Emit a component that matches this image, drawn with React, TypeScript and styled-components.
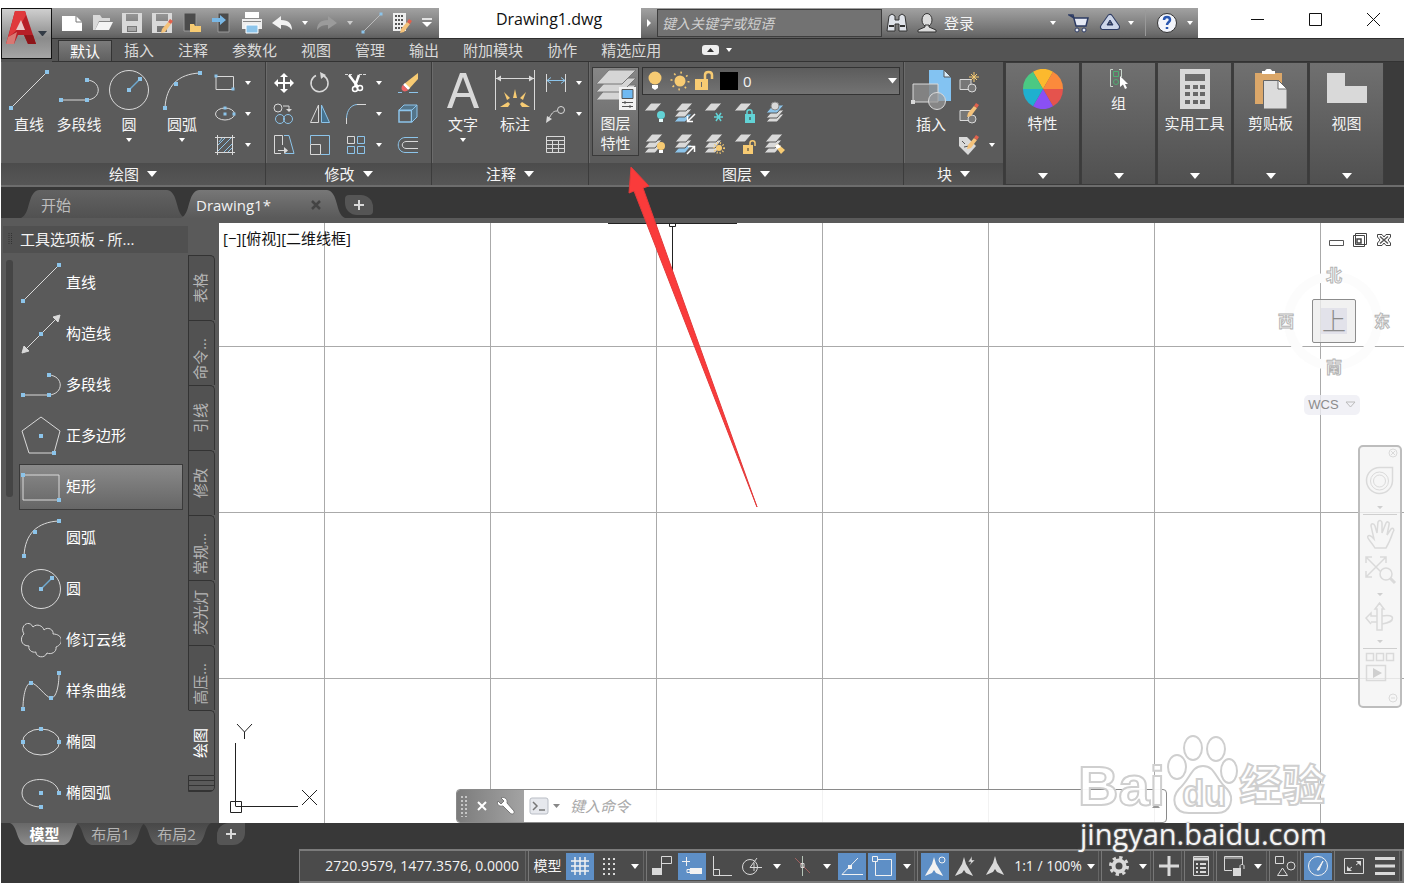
import React from "react";
import styled, { createGlobalStyle, css } from "styled-components";

const L = "#d9d9d9";
const B = "#8cc4ea";
const Y = "#f7cb73";

const GlobalStyle = createGlobalStyle`
  *, *::before, *::after { box-sizing: border-box; }
  body {
    margin: 0;
    background: #fff;
    color: #f4f4f4;
    font: 15px/20px "Open Sans", "Noto Sans CJK SC", sans-serif;
  }
  button, input, select {
    font: inherit;
    color: inherit;
    margin: 0;
    padding: 0;
    border: 0;
    background: none;
  }
  svg { display: block; flex: none; }
`;

/* ---------- icon helpers ---------- */

const Svg = ({ w = 24, h, box, children }: { w?: number; h?: number; box?: string; children: React.ReactNode }) => (
  <svg width={w} height={h ?? w} viewBox={box ?? `0 0 ${w} ${h ?? w}`} fill="none" stroke={L} strokeWidth="1" aria-hidden="true">
    {children}
  </svg>
);

const Dots = ({ at, s = 4 }: { at: number[][]; s?: number }) => (
  <g fill={B} stroke="none">
    {at.map(([x, y]) => (
      <rect key={`${x}-${y}`} x={x - s / 2} y={y - s / 2} width={s} height={s} />
    ))}
  </g>
);

const Caret = ({ w = 6, color = "#fff" }: { w?: number; color?: string }) => (
  <svg width={w} height={w / 2 + 1} viewBox="0 0 12 8" preserveAspectRatio="none" aria-hidden="true">
    <path d="M0 0H12L6 8Z" fill={color} />
  </svg>
);

const Sheet = ({ x = 0, y = 0, fill = L }: { x?: number; y?: number; fill?: string }) => (
  <path d="M7 0H18L11 8H0Z" transform={`translate(${x} ${y})`} fill={fill} stroke="#5b5b5b" />
);

const Stack = ({ mid = L, low = L }: { mid?: string; low?: string }) => (
  <>
    <Sheet x={1} y={13} fill={low} />
    <Sheet x={1} y={8} fill={mid} />
    <Sheet x={2} y={2} />
  </>
);

const pencil = (
  <g stroke="none">
    <path d="M12 15L11 19L15 18L21 10L18 8Z" fill="#f4c27a" />
    <path d="M18 8L21 10L23 7L20 5Z" fill="#e0614d" />
  </g>
);

/* ---------- drawing tools, 40px ---------- */

const big = {
  line: (
    <Svg w={40}>
      <path d="M2 38L38 2" />
      <Dots at={[[2, 38], [38, 2]]} />
    </Svg>
  ),
  xline: (
    <Svg w={40}>
      <path d="M4 36L36 4" />
      <path d="M1 39L3 32L8 37ZM39 1L32 3L37 8Z" fill={L} />
      <Dots at={[[20, 20]]} />
    </Svg>
  ),
  pline: (
    <Svg w={40}>
      <path d="M2 30H28C43 29 43 11 28 10" />
      <Dots at={[[2, 30], [28, 30], [28, 10]]} />
    </Svg>
  ),
  polygon: (
    <Svg w={40}>
      <path d="M20 1L39 15L33 37H8L1 15Z" />
      <Dots at={[[20, 20], [33, 37]]} />
    </Svg>
  ),
  rect: (
    <Svg w={40}>
      <path d="M2 8H38V33H2Z" />
      <Dots at={[[2, 8], [38, 33]]} />
    </Svg>
  ),
  arc: (
    <Svg w={40}>
      <path d="M3 38C4 16 16 4 38 3" />
      <Dots at={[[3, 38], [14, 14], [38, 3]]} />
    </Svg>
  ),
  circle: (
    <Svg w={40}>
      <circle cx="20" cy="20" r="19.500" />
      <path d="M20 20L31 9" stroke="#6fa9d0" strokeWidth="1.500" />
      <Dots at={[[20, 20], [31, 9]]} />
    </Svg>
  ),
  cloud: (
    <Svg w={40}>
      <path d="M3 14C-2 6 8 -1 12 7C16 3 22 6 23 10C27 6 33 10 32 14C42 14 43 24 35 27C36 32 30 35 26 33C23 40 14 36 15 32C11 33 7 30 8 26C-1 26 -1 17 3 14Z" />
    </Svg>
  ),
  spline: (
    <Svg w={40}>
      <path d="M2 38C2 24 5 12 10 12C16 12 24 26 30 27C35 27 38 16 38 2" />
      <Dots at={[[2, 38], [10, 12], [30, 27], [38, 2]]} />
    </Svg>
  ),
  ellipse: (
    <Svg w={40}>
      <ellipse cx="20" cy="20" rx="18.500" ry="13" />
      <Dots at={[[20, 7], [2, 20], [38, 20]]} />
    </Svg>
  ),
  ellipseArc: (
    <Svg w={40}>
      <path d="M38 20C36 2 1 2 1 20C1 28 9 34 20 34" />
      <Dots at={[[20, 20], [38, 20], [20, 34]]} />
    </Svg>
  ),
  text: (
    <Svg w={40}>
      <path d="M4 38L17 3H23L36 38H31L27 27H13L9 38ZM14 23H26L20 7Z" fill={L} stroke="none" fillRule="evenodd" />
    </Svg>
  ),
  dim: (
    <Svg w={40}>
      <path d="M.5 0V40M39.500 0V40M1 8.500H39" />
      <path d="M1 8.500L6 5.500V11.500ZM39 8.500L34 5.500V11.500Z" fill={L} stroke="none" />
      <g fill={Y} stroke="none">
        <path d="M18 28L20 19L22 28ZM12 30L9 22L15 28ZM28 30L31 22L25 28ZM5 37L13 32L15 34L13 37ZM35 37L27 32L25 34L27 37Z" />
      </g>
    </Svg>
  ),
  layers: (
    <Svg w={42}>
      <g fill="#d5d5d5" stroke="#777">
        <path d="M14 16H41L27 31H1Z" />
        <path d="M14 9H41L27 23H1Z" />
        <path d="M14 1H41L27 15H1Z" />
      </g>
      <path d="M24 18H41V41H24Z" fill="#f2f2f2" stroke="none" />
      <path d="M27 20.500H38V29.500H27Z" fill="#6fb9f2" stroke="#555" />
      <path d="M27 33.500H38M27 37.500H38M30 32V35M35 36V39" stroke="#555" />
    </Svg>
  ),
  insert: (
    <Svg w={40}>
      <path d="M18 0H33L40 7V31H18Z" fill="#83c3f2" stroke="none" />
      <path d="M33 0V7H40Z" fill="#d8ecfa" stroke="#555" />
      <path d="M2 14H27V32H2Z" fill="#8a8a8a" fillOpacity=".85" />
      <circle cx="26" cy="31" r="8.500" fill="#999" fillOpacity=".7" />
      <path d="M0 30H4V34H0Z" fill={L} stroke="none" />
    </Svg>
  ),
  wheel: (
    <Svg w={40}>
      <g stroke="none">
        <path d="M20 20L10 2.700A20 20 0 0 1 30 2.700Z" fill="#fcb92d" />
        <path d="M20 20L30 2.700A20 20 0 0 1 40 20Z" fill="#fb8a3c" />
        <path d="M20 20L40 20A20 20 0 0 1 30 37.300Z" fill="#e5534d" />
        <path d="M20 20L30 37.300A20 20 0 0 1 10 37.300Z" fill="#8a50f5" />
        <path d="M20 20L10 37.300A20 20 0 0 1 0 20Z" fill="#1fb0cf" />
        <path d="M20 20L0 20A20 20 0 0 1 10 2.700Z" fill="#4bc983" />
      </g>
    </Svg>
  ),
  group: (
    <Svg w={20}>
      <path d="M4 .5H1.500V17.500H4M10 .5H12.500V8" stroke="#c9d6cc" />
      <path d="M4.500 2.500H9.500V7.500H4.500Z" stroke="#4fae72" />
      <circle cx="7" cy="13" r="2.500" stroke="#4fae72" />
      <path d="M11 7V18L14 15.500L16 20L18 19L16 15H19Z" fill="#fff" stroke="none" />
    </Svg>
  ),
  calc: (
    <Svg w={40}>
      <path d="M5 0H35V40H5ZM10 5V12H30V5ZM10 16V20H15V16ZM18 16V20H23V16ZM25 16V20H30V16ZM10 23V27H15V23ZM18 23V27H23V23ZM25 23V27H30V23ZM10 31V35H15V31ZM18 31V35H23V31ZM25 31V35H30V31Z" fill={L} stroke="none" fillRule="evenodd" />
    </Svg>
  ),
  clip: (
    <Svg w={40}>
      <path d="M4 4H31V35H4Z" fill="#dba769" stroke="none" />
      <path d="M11 2H14C15 -1 20 -1 21 2H24V5H11Z" fill="#fff" stroke="none" />
      <path d="M12.500 11.500H27L36 20V40H12.500Z" fill="#dcdcdc" stroke="#666" />
      <path d="M27 11V20H36Z" fill="#fff" stroke="#666" />
    </Svg>
  ),
  base: (
    <Svg w={40}>
      <path d="M0 4H18V17H40V34H0Z" fill={L} stroke="none" />
    </Svg>
  ),
};

/* ---------- ribbon tools, 24px ---------- */

const small = {
  rect: (
    <Svg>
      <path d="M3 5.500H20.500V18.500H3Z" />
      <Dots at={[[3, 5], [20, 18]]} s={3} />
    </Svg>
  ),
  ellipse: (
    <Svg>
      <ellipse cx="12" cy="12" rx="9.500" ry="6" />
      <Dots at={[[12, 6], [12, 12], [21, 12]]} s={3} />
    </Svg>
  ),
  hatch: (
    <Svg>
      <path d="M2 4.500H22M2 19.500H22M4.500 2V22M19.500 2V22" />
      <path d="M5 12L12 5M5 18L18 5M11 19L19 11M6 9L9 5M15 19L19 15" stroke={B} />
    </Svg>
  ),
  move: (
    <Svg>
      <path d="M12 4V20M4 12H20" stroke="#fff" strokeWidth="2" />
      <path d="M12 2L16 6H8ZM12 22L8 18H16ZM2 12L6 8V16ZM22 12L18 16V8Z" fill="#fff" stroke="none" />
    </Svg>
  ),
  rotate: (
    <Svg>
      <path d="M8 4.500A8.500 8.500 0 1 0 16 5" strokeWidth="1.500" />
      <path d="M12 1L18 4L13 8Z" fill={L} stroke="none" />
    </Svg>
  ),
  trim: (
    <Svg>
      <path d="M1 3.500H8M15 3.500H22" strokeDasharray="3 1" />
      <path d="M5 4L14 16M15 4L11 15" stroke="#fff" strokeWidth="2.500" />
      <circle cx="11" cy="18" r="2.500" stroke="#fff" strokeWidth="1.500" />
      <circle cx="16" cy="17" r="2.500" stroke="#fff" strokeWidth="1.500" />
    </Svg>
  ),
  erase: (
    <Svg>
      <path d="M2 21.500H6M13 21.500H22" stroke={B} />
      <path d="M22 2V8L13 18L8 13Z" fill={Y} stroke="none" />
      <path d="M9 12L14 17L12 19L7 14Z" fill="#fff" stroke="none" />
      <path d="M7 14L12 19C9 22 4 20 6 15Z" fill="#e66" stroke="none" />
    </Svg>
  ),
  copy: (
    <Svg>
      <circle cx="6" cy="6" r="4" />
      <path d="M11 4H17V8" />
      <path d="M14 7H20L17 10Z" fill={L} stroke="none" />
      <circle cx="8" cy="17" r="4.500" stroke={B} />
      <circle cx="16" cy="17" r="4.500" stroke={B} />
    </Svg>
  ),
  mirror: (
    <Svg>
      <path d="M10.500 3V20.500H2.500Z" />
      <path d="M13.500 3V20.500H21.500Z" stroke={B} fill="#45728f" />
    </Svg>
  ),
  fillet: (
    <Svg>
      <path d="M2.500 22V16M13 2.500H22" />
      <path d="M2.500 16C3 8 7 3 13 2.500" stroke={B} />
    </Svg>
  ),
  explode: (
    <Svg>
      <path d="M3 8.500H15.500V20H3Z" stroke={B} strokeWidth="1.500" />
      <path d="M3 8L8 3H21L16 8ZM16 8L21 3V15L16 20" stroke={B} fill="#54758a" />
    </Svg>
  ),
  stretch: (
    <Svg>
      <path d="M10.500 12V2.500H2.500V20.500H9M6 17.500H13" />
      <path d="M12 14L16 17.500L12 21Z" fill={L} stroke="none" />
      <path d="M12 2.500H17L22 20.500H13" stroke={B} />
    </Svg>
  ),
  scale: (
    <Svg>
      <path d="M2.500 11V2.500H21.500V21.500H13" stroke={B} />
      <path d="M2.500 11.500H12.500V21.500H2.500Z" />
    </Svg>
  ),
  array: (
    <Svg>
      <path d="M3.500 3.500H10.500V10.500H3.500Z" />
      <path d="M13.500 3.500H20.500V10.500H13.500ZM3.500 13.500H10.500V20.500H3.500ZM13.500 13.500H20.500V20.500H13.500Z" stroke={B} />
    </Svg>
  ),
  offset: (
    <Svg>
      <path d="M22 4.500H9C0 5 0 19 9 19.500H22" stroke={B} />
      <path d="M22 8.500H10C5 9 5 15 10 15.500H22" />
    </Svg>
  ),
  linear: (
    <Svg>
      <path d="M2.500 3V21M21.500 3V21" />
      <path d="M3 9.500H21M7 6.500L3 9.500L7 12.500M17 6.500L21 9.500L17 12.500" stroke={B} />
    </Svg>
  ),
  leader: (
    <Svg>
      <circle cx="17" cy="8" r="3.500" />
      <path d="M13 9C9 9 8 11 4 18" />
      <path d="M2 21L3 14L8 17Z" fill={L} stroke="none" />
    </Svg>
  ),
  table: (
    <Svg>
      <path d="M2.500 3.500H20.500V19.500H2.500ZM2.500 7.500H20.500M2.500 11.500H20.500M2.500 15.500H20.500M8.500 7V19M14.500 7V19" />
    </Svg>
  ),
  off: (
    <Svg>
      <Sheet x={1} y={2} />
      <circle cx="18" cy="14" r="4" fill="#62d3d6" stroke="none" />
      <path d="M16 18H20V21H16Z" fill="#e6f8f8" stroke="none" />
    </Svg>
  ),
  isolate: (
    <Svg>
      <Stack mid={L} low={B} />
      <path d="M22 13L15 20M14.500 15V20.500H20" stroke="#fff" strokeWidth="1.500" />
    </Svg>
  ),
  freeze: (
    <Svg>
      <Sheet x={1} y={2} />
      <path d="M11 16H20M13 12L18 20M18 12L13 20" stroke="#62d3d6" strokeWidth="1.500" />
    </Svg>
  ),
  lock: (
    <Svg>
      <Sheet x={1} y={2} />
      <path d="M14 14V11C14 8 19 8 19 11V14" stroke="#62d3d6" strokeWidth="1.500" />
      <path d="M12 13H22V22H12Z" fill="#62d3d6" stroke="none" />
      <path d="M17 16V19" stroke="#333" />
    </Svg>
  ),
  current: (
    <Svg>
      <Sheet x={3} y={13} />
      <Sheet x={3} y={9} />
      <Sheet x={3} y={4} fill={B} />
      <circle cx="12" cy="5" r="4" fill={L} stroke="#888" />
    </Svg>
  ),
  on: (
    <Svg>
      <Stack />
      <circle cx="18" cy="14" r="4" fill={Y} stroke="none" />
      <path d="M16 18H20V21H16Z" fill="#fff" stroke="none" />
    </Svg>
  ),
  unisolate: (
    <Svg>
      <Stack mid={L} low={B} />
      <path d="M14 22L21 15M15 14.500H21.500V20" stroke="#fff" strokeWidth="1.500" />
    </Svg>
  ),
  thaw: (
    <Svg>
      <Stack />
      <circle cx="16" cy="16" r="5" stroke={Y} strokeWidth="2" strokeDasharray="1 2" />
      <circle cx="16" cy="16" r="3" fill={Y} stroke="none" />
    </Svg>
  ),
  unlock: (
    <Svg>
      <Sheet x={1} y={2} />
      <path d="M17 13V11C17 8 22 8 22 11V14" stroke={Y} strokeWidth="1.500" />
      <path d="M10 13H20V22H10Z" fill={Y} stroke="none" />
      <path d="M15 16V19" stroke="#333" />
    </Svg>
  ),
  match: (
    <Svg>
      <Stack />
      <path d="M12 14L15 12L22 18L18 22Z" fill={Y} stroke="none" />
      <path d="M12 14L15 12L18 15L14 17Z" fill="#fff" stroke="none" />
    </Svg>
  ),
  create: (
    <Svg>
      <path d="M3 8.500H14V18.500H3Z" fill="#777" />
      <circle cx="15" cy="17" r="4" fill="#777" />
      <path d="M17 1V11M12 6H22M14 3L20 9M20 3L14 9" stroke={Y} />
    </Svg>
  ),
  edit: (
    <Svg>
      <path d="M3 8.500H14V18.500H3Z" fill="#777" />
      <circle cx="15" cy="17" r="4" fill="#777" />
      <g transform="translate(-1 -4)">{pencil}</g>
    </Svg>
  ),
  attr: (
    <Svg>
      <path d="M2 4H10L19 13L11 22L2 13Z" fill={L} stroke="none" />
      <path d="M5 8L8 11M7 14L12 13" stroke="#555" />
      <g transform="translate(-1 -3)">{pencil}</g>
    </Svg>
  ),
};

/* ---------- title bar ---------- */

const qat = {
  fresh: <Svg w={22}><path d="M1 4H15L21 10V19H1Z" fill="#fff" stroke="none" /><path d="M15 4V10H21" stroke="#777" /></Svg>,
  open: <Svg w={22}><path d="M2 18V3H9L11 6H19V9H8L4 18Z" fill={L} stroke="none" /><path d="M8 10H22L18 18H4Z" fill="#f4f4f4" stroke="none" /></Svg>,
  save: <Svg w={22}><path d="M1 1H21V21H1ZM5 2V9H17V2ZM6 14V20H16V14Z" fill={L} stroke="none" fillRule="evenodd" /><path d="M7 16H15M7 18H15" /></Svg>,
  saveAs: <Svg w={22}><path d="M1 1H21V21H1ZM5 2V9H17V2ZM6 14V20H16V14Z" fill={L} stroke="none" fillRule="evenodd" /><g transform="translate(-1 2)">{pencil}</g></Svg>,
  webOpen: <Svg w={22}><path d="M3 1H15V19H3Z" fill="#4b4b4b" stroke="#999" /><path d="M9 12H13L14 14H20V20H9Z" fill={Y} stroke="none" /></Svg>,
  webSave: <Svg w={22}><path d="M7 1H18V20H7Z" fill="#4b4b4b" stroke="#999" /><path d="M1 6H9V3L15 8L9 13V10H1Z" fill="#79b8e6" stroke="none" /></Svg>,
  print: <Svg w={22}><path d="M4 0H18V6H4Z" fill="#fff" stroke="none" /><path d="M1 7H21V17H1Z" fill="#eee" stroke="none" /><path d="M2 9.500H20" stroke="#888" /><path d="M5 13H17V21H5Z" fill={B} stroke="#fff" /></Svg>,
  undo: <Svg w={22}><path d="M1 11L10 4V8C18 8 21 12 21 18C18 14 15 13 10 13V17Z" fill="#f2f2f2" stroke="none" /></Svg>,
  redo: <Svg w={22}><path d="M21 11L12 4V8C4 8 1 12 1 18C4 14 7 13 12 13V17Z" fill="#9b9b9b" stroke="none" /></Svg>,
  line: <Svg w={22}><path d="M2 20L20 2" stroke="#bbb" /><Dots at={[[2, 20], [20, 2]]} s={3} /></Svg>,
  sheet: <Svg w={22}><path d="M2 1H15V19H2Z" fill="#eee" stroke="none" /><path d="M4 4H13M4 8H13M4 12H13M4 16H13" stroke="#555" strokeWidth="2" strokeDasharray="2 1" /><g transform="translate(-2 2)">{pencil}</g></Svg>,
};

const barFill = "linear-gradient(#a2a2a2, #6c6c6c 85%, #5e5e5e)";

const Window = styled.div`
  position: relative;
  display: flex;
  flex-direction: column;
  min-height: 100vh;
  min-width: 1280px;
  padding: 8px 1px 1px;
  overflow: hidden;
`;

const Header = styled.header`
  display: grid;
  grid-template-columns: 51px minmax(0, 1fr);
  grid-template-rows: 30px 24px;
  background: linear-gradient(#fff 30px, #545454 30px);
`;

const AppButton = styled.button`
  grid-row: 1 / 3;
  height: 51px;
  display: flex;
  align-items: center;
  justify-content: center;
  gap: 2px;
  border: 1px solid #111;
  background: linear-gradient(#cfcfcf, #8b8b8b 60%, #a5a5a5);
  & > svg:first-child {
    align-self: flex-start;
    margin-top: 1px;
  }
`;

const TitleRow = styled.div`
  display: flex;
  min-width: 0;
`;

const QuickBar = styled.div`
  display: flex;
  flex: none;
  align-items: center;
  padding-left: 5px;
  width: 387px;
  background: ${barFill};
`;

const IconButton = styled.button<{ $w?: number }>`
  width: ${(p) => p.$w ?? 30}px;
  height: 30px;
  flex: none;
  display: flex;
  align-items: center;
  justify-content: center;
`;

const FileName = styled.h1`
  flex: 1;
  margin: 0;
  padding-left: 18px;
  color: #111;
  text-align: center;
  font-size: 16px;
  font-weight: 400;
  line-height: 22px;
`;

const InfoBar = styled.div`
  display: flex;
  flex: none;
  align-items: center;
  width: 557px;
  background: ${barFill};
`;

const Search = styled.input`
  flex: none;
  width: 225px;
  height: 28px;
  padding-left: 4px;
  border: 1px solid #3d3d3d;
  background: #727272;
  font-size: 14px;
  font-style: italic;
  &::placeholder { color: #cfcfcf; }
`;

const Login = styled.button`
  display: flex;
  flex: none;
  align-items: center;
  justify-content: space-between;
  width: 114px;
  height: 30px;
  padding-left: 2px;
`;

const Divider = styled.span`
  width: 1px;
  height: 26px;
  margin: 0 6px 0 2px;
  background: #999;
`;

const WindowControls = styled.div`
  display: flex;
  flex: none;
  justify-content: space-between;
  width: 206px;
  padding: 0 2px 6px 30px;
  background: #fff;
`;

const WindowButton = styled.button`
  width: 58px;
  height: 22px;
  display: flex;
  align-items: center;
  justify-content: center;
`;

const TabBar = styled.nav`
  display: flex;
  align-items: flex-end;
  padding-left: 6px;
  border-top: 1px solid #2f2f2f;
  border-bottom: 1px solid #333;
  background: #545454;
`;

const RibbonTab = styled.button<{ $active?: boolean }>`
  height: 21px;
  padding: 0 12px;
  line-height: 19px;
  color: ${(p) => (p.$active ? "#fff" : "#dadada")};
  ${(p) =>
    p.$active &&
    css`
      border: 1px solid #333;
      border-bottom: 0;
      padding: 0 11px;
      background: linear-gradient(#7b7b7b, #606060);
    `}
`;

const RibbonToggle = styled.button`
  display: flex;
  align-items: center;
  gap: 7px;
  height: 22px;
  padding-left: 29px;
`;

/* ---------- ribbon ---------- */

const Ribbon = styled.section`
  display: flex;
  height: 125px;
  border-bottom: 2px solid #6d6d6d;
  background: #3b3b3b;
`;

const Panel = styled.div<{ $w: number }>`
  display: flex;
  flex-direction: column;
  width: ${(p) => p.$w}px;
  flex: none;
  border-right: 1px solid #3c3c3c;
  box-shadow: inset 1px 0 #6b6b6b;
  background: #5b5b5b;
`;

const PanelBody = styled.div<{ $pad?: string }>`
  display: flex;
  flex: 1;
  padding: ${(p) => p.$pad ?? "5px 0 0 3px"};
`;

const PanelFooter = styled.button`
  display: flex;
  align-items: center;
  justify-content: center;
  gap: 8px;
  height: 22px;
  background: linear-gradient(#4c4c4c, #565656);
`;

const BigButton = styled.button<{ $w: number; $framed?: boolean }>`
  display: flex;
  flex-direction: column;
  align-items: center;
  gap: 4px;
  width: ${(p) => p.$w}px;
  height: 89px;
  padding-top: 3px;
  flex: none;
  ${(p) =>
    p.$framed &&
    css`
      padding-top: 1px;
      gap: 2px;
      border: 1px solid #3a3a3a;
      background: linear-gradient(#868686, #646464);
    `}
`;

const IconRows = styled.div<{ $cols: string; $gap?: number }>`
  display: grid;
  grid-template-columns: ${(p) => p.$cols};
  grid-auto-rows: 31px;
  column-gap: ${(p) => p.$gap ?? 0}px;
`;

const Tool = styled.button`
  display: flex;
  align-items: center;
  height: 31px;
  padding-left: 3px;
  gap: 8px;
`;

const LayerColumn = styled.div`
  flex: 1;
  padding: 0 3px 0 1px;
`;

const LayerCombo = styled.label`
  display: flex;
  align-items: center;
  gap: 3px;
  height: 28px;
  margin: 0 0 2px 2px;
  padding: 0 2px 0 0;
  border: 1px solid #333;
  background: linear-gradient(#5c5c5c, #737373);
`;

const LayerSelect = styled.select`
  flex: 1;
  appearance: none;
  outline: none;
  padding-left: 2px;
`;

const Collapsed = styled.button`
  display: flex;
  flex-direction: column;
  align-items: center;
  gap: 4px;
  width: 75px;
  height: 121px;
  margin: 1px 0 0 1px;
  padding: 6px 0 5px;
  flex: none;
  border: 1px solid #3d3d3d;
  border-width: 0 1px;
  background: linear-gradient(#707070, #505050);
  & > :last-child { margin-top: auto; }
`;

/* ---------- document tabs ---------- */

const DocTabs = styled.nav`
  display: flex;
  height: 31px;
  padding: 3px 0 0 20px;
  background: #373737;
`;

const DocTab = styled.button<{ $active?: boolean }>`
  display: flex;
  align-items: center;
  justify-content: space-between;
  width: 164px;
  height: 28px;
  margin-left: ${(p) => (p.$active ? "-4px" : "0")};
  padding: 2px 24px 0 ${(p) => (p.$active ? 15 : 20)}px;
  color: ${(p) => (p.$active ? "#f2f2f2" : "#bdbdbd")};
  background: ${(p) => (p.$active ? "linear-gradient(#777, #5a5a5a)" : "linear-gradient(#626262, #515151)")};
  clip-path: path("M0 28C10 24 6 2 18 0H146C158 2 154 24 164 28Z");
`;

const AddTab = styled.button<{ $bottom?: boolean }>`
  width: 28px;
  height: ${(p) => (p.$bottom ? 22 : 20)}px;
  margin: ${(p) => (p.$bottom ? "0 0 0 6px" : "5px 0 0 0")};
  display: flex;
  align-items: center;
  justify-content: center;
  border-radius: ${(p) => (p.$bottom ? "12px 0 12px 4px" : "4px 12px 4px 12px")};
  background: #555;
`;

/* ---------- workspace ---------- */

const Workspace = styled.main`
  display: flex;
  flex: 1;
  padding-top: 5px;
  background: #5a5a5a;
`;

const Palette = styled.aside`
  display: grid;
  grid-template-columns: 187px 27px;
  width: 218px;
  flex: none;
  align-content: start;
`;

const PaletteTitle = styled.h2`
  grid-column: 1;
  display: flex;
  align-items: center;
  gap: 8px;
  margin: 3px 0 0 2px;
  height: 27px;
  padding: 0 0 2px 5px;
  background: #505050;
  font-size: 15px;
  font-weight: 400;
`;

const PaletteBody = styled.div`
  grid-column: 1;
  grid-row: 2;
  display: flex;
  gap: 6px;
  padding: 7px 5px 0 5px;
`;

const ScrollThumb = styled.div`
  width: 7px;
  height: 237px;
  border-radius: 3px;
  background: #454545;
`;

const ToolList = styled.div`
  display: flex;
  flex-direction: column;
  flex: 1;
  gap: 5px;
`;

const PaletteItem = styled.button<{ $active?: boolean }>`
  display: flex;
  align-items: center;
  gap: 5px;
  height: 46px;
  padding-left: 1px;
  border: 1px solid transparent;
  color: #fff;
  ${(p) =>
    p.$active &&
    css`
      border-color: #3a3a3a;
      background: linear-gradient(#8a8a8a, #666);
    `}
`;

const ItemLabel = styled.span`
  padding-bottom: 2px;
`;

const SideTabs = styled.div`
  grid-column: 2;
  grid-row: 1 / 3;
  padding-top: 32px;
`;

const SideTab = styled.button<{ $active?: boolean; $clipped?: boolean }>`
  display: flex;
  align-items: ${(p) => (p.$clipped ? "flex-end" : "center")};
  justify-content: center;
  width: 27px;
  height: 65px;
  padding: 0 4px ${(p) => (p.$clipped ? 5 : 0)}px 0;
  border: 1px solid #333;
  border-bottom-width: 0;
  border-radius: 0 5px 0 0;
  color: ${(p) => (p.$active ? "#fff" : "#b5b5b5")};
  background: ${(p) => (p.$active ? "#5a5a5a" : "#525252")};
  border-left-color: ${(p) => (p.$active ? "#5a5a5a" : "#333")};
`;

const SideLabel = styled.span`
  writing-mode: vertical-rl;
  text-orientation: sideways;
  transform: rotate(180deg);
`;

const SideMore = styled.div`
  width: 27px;
  height: 17px;
  border: 1px solid #333;
  border-radius: 0 0 5px 0;
  background: repeating-linear-gradient(#5a5a5a 0 4px, #333 4px 5px);
`;

const Canvas = styled.section`
  position: relative;
  flex: 1;
  background-color: #fff;
  background-image: linear-gradient(to right, #aaa 1px, transparent 1px), linear-gradient(#aaa 1px, transparent 1px);
  background-size: 166px 166px;
  background-position: 105px 123px;
`;

const ViewLabel = styled.p`
  margin: 0;
  padding: 5px 4px;
  color: #111;
`;

const ViewControls = styled.div`
  position: absolute;
  top: 9px;
  right: 12px;
  display: flex;
  gap: 8px;
`;

const PlainButton = styled.button`
  display: flex;
  align-items: center;
  justify-content: center;
`;

const CubeRing = styled.div`
  position: absolute;
  top: 49px;
  right: 22px;
  width: 98px;
  height: 98px;
  border: 9px solid #fcfcfc;
  border-radius: 50%;
`;

const Compass = styled.div`
  position: absolute;
  top: 44px;
  right: 14px;
  display: grid;
  grid-template-columns: 34px 44px 34px;
  grid-template-rows: 32px 44px 32px;
  justify-items: center;
`;

const CompassPoint = styled.span<{ $area: string; $align: string }>`
  grid-area: ${(p) => p.$area};
  place-self: ${(p) => p.$align};
  color: #fff;
  font-size: 16px;
  font-weight: 700;
  line-height: 16px;
  -webkit-text-stroke: 1px #b4b4b4;
`;

const CubeFace = styled.button`
  grid-area: 2 / 2;
  width: 44px;
  height: 44px;
  border: 1px solid #8c8c8c;
  border-radius: 2px;
  background: linear-gradient(#e2e2ea, #e2e2ea) center / 26px 26px no-repeat #eeeeeecc;
  color: #8a8a8a;
  font-size: 24px;
  font-weight: 300;
  line-height: 36px;
`;

const Wcs = styled.button`
  position: absolute;
  top: 172px;
  right: 44px;
  display: flex;
  align-items: center;
  justify-content: center;
  gap: 6px;
  width: 56px;
  height: 20px;
  border-radius: 5px;
  background: #ededf4cc;
  color: #8c8c8c;
  font: 13px/20px "Liberation Sans", sans-serif;
`;

const NavBar = styled.div`
  position: absolute;
  top: 222px;
  right: 2px;
  width: 44px;
  height: 263px;
  border: 2px solid #bdbdbd;
  border-radius: 5px;
  background: #f4f4f4cc;
`;

const UcsIcon = styled.div`
  position: absolute;
  left: 9px;
  bottom: 9px;
`;

const Crosshair = styled.div`
  position: absolute;
  left: 389px;
  top: 0;
`;

const CommandLine = styled.form`
  position: absolute;
  left: 237px;
  bottom: 0;
  display: flex;
  width: 60%;
  height: 34px;
  border: 1px solid #8a8a8a;
  border-radius: 4px;
  background: #ffffffd9;
`;

const CommandGrip = styled.div`
  display: flex;
  align-items: center;
  gap: 9px;
  width: 67px;
  padding: 0 0 0 3px;
  border-radius: 3px 0 0 3px;
  background: linear-gradient(90deg, #7c7c7c, #a3a3a3);
`;

const CommandInput = styled.input`
  flex: 1;
  min-width: 0;
  padding-left: 10px;
  outline: none;
  color: #333;
  font-style: italic;
  &::placeholder { color: #a8a8a8; opacity: 1; }
`;

/* ---------- footer ---------- */

const Footer = styled.footer`
  background: #383838;
`;

const LayoutTabs = styled.nav`
  display: flex;
  height: 26px;
  padding-left: 9px;
`;

const LayoutTab = styled.button<{ $active?: boolean }>`
  width: 69px;
  height: 22px;
  color: ${(p) => (p.$active ? "#fff" : "#b4b4b4")};
  font-weight: ${(p) => (p.$active ? 700 : 400)};
  background: ${(p) => (p.$active ? "linear-gradient(#686868, #8c8c8c)" : "linear-gradient(#484848, #5e5e5e)")};
  clip-path: path("M0 0H69C62 3 64 20 54 22H16C6 20 8 3 0 0Z");
  & + & { margin-left: -3px; }
`;

const StatusBar = styled.div`
  display: flex;
  align-items: stretch;
  width: max-content;
  height: 34px;
  margin-left: auto;
  border: solid #7b7b7b;
  border-width: 2px 1px;
  background: #4b4b4b;
  font-size: 14px;
`;

const StatusGroup = styled.div<{ $w: number }>`
  display: flex;
  align-items: center;
  justify-content: center;
  width: ${(p) => p.$w}px;
  border-right: 1px solid #777;
  box-shadow: inset -2px 0 #4b4b4b, inset -3px 0 #666;
`;

const Coordinates = styled.output`
  width: 100%;
  padding-right: 9px;
  text-align: right;
`;

const StatusButton = styled.button<{ $w?: number; $on?: boolean }>`
  display: flex;
  align-items: center;
  justify-content: center;
  width: ${(p) => p.$w ?? 30}px;
  height: 29px;
  white-space: nowrap;
  gap: 5px;
  ${(p) => p.$on && css`background: #5e8fc6; outline: 1px solid #4b4b4b; outline-offset: -1px;`}
`;

const Watermark = styled.div`
  position: absolute;
  left: 1078px;
  top: 734px;
  color: #f4f4f4;
  pointer-events: none;
`;

const WatermarkLogo = styled.div`
  position: relative;
  display: flex;
  align-items: flex-end;
  height: 80px;
  color: #fffffff0;
  font: 700 56px/56px "Liberation Sans", "Noto Sans CJK SC", sans-serif;
  -webkit-text-stroke: 2px #cfcfcf;
`;

const WatermarkPaw = styled.div`
  position: relative;
  width: 74px;
  height: 80px;
`;

const WatermarkDu = styled.span`
  position: absolute;
  left: 17px;
  top: 40px;
  font-size: 36px;
  line-height: 40px;
`;

const WatermarkCn = styled.span`
  font-size: 43px;
`;

const WatermarkUrl = styled.div`
  padding: 4px 0 0 2px;
  font-size: 29px;
  line-height: 32px;
  text-shadow: 0 0 2px #777, 0 0 2px #777;
`;

const PointerArrow = styled.div`
  position: absolute;
  left: 620px;
  top: 160px;
  pointer-events: none;
`;

/* ---------- status icons ---------- */

const W = "#f2f2f2";
const person = "M11 1L13 8L19 18L20 20L13 17L11 14L9 17L2 20L3 18L9 8Z";
const st = {
  grid: <Svg w={22}><path d="M6 2V20M11 2V20M16 2V20M2 6H20M2 11H20M2 16H20" stroke={W} strokeWidth="1.500" /></Svg>,
  snap: <Svg w={22}><path d="M4 4H19M4 9H19M4 14H19M4 19H19" strokeWidth="2" strokeDasharray="2 3" /></Svg>,
  infer: <Svg w={22}><path d="M1 13H11V20H1Z" fill={L} stroke="none" /><path d="M10.500 13V1.500H20.500V8.500H11" /></Svg>,
  dyn: <Svg w={22}><path d="M1 6.500H9M5.500 2V11" stroke={W} /><path d="M9 13H21V19H9Z" fill={W} stroke="none" /><path d="M6 14.500H9V17.500H6Z" stroke={W} /></Svg>,
  ortho: <Svg w={22}><path d="M2.500 1V20.500H21M2.500 14.500H8.500V20" /></Svg>,
  polar: <Svg w={22}><circle cx="9" cy="12" r="7.500" /><path d="M21 12.500H9L16 3M13 8V16" /></Svg>,
  iso: <Svg w={22}><path d="M4 3L19 18" stroke="#a06060" /><path d="M11.500 1V21" stroke="#b7c4b8" /><path d="M10 8.500H13V12.500H10Z" /></Svg>,
  track: <Svg w={22}><path d="M17 3L1 19.500H22" stroke={W} /><path d="M7 10H11V14H7Z" fill={W} stroke="none" /></Svg>,
  osnap: <Svg w={22}><path d="M4.500 4.500H20.500V20.500H4.500Z" stroke={W} /><path d="M1.500 1.500H6.500V6.500H1.500Z" fill="#5e8fc6" stroke={W} /></Svg>,
  annoVis: <Svg w={22}><path d={person} transform="translate(-1 1)" fill={W} stroke="none" /><circle cx="18" cy="5" r="3" stroke={W} /></Svg>,
  annoAuto: <Svg w={22}><path d={person} transform="translate(-1 1)" fill={L} stroke="none" /><path d="M18 1L14 7H17L15 11L21 5H18Z" fill={L} stroke="#4b4b4b" strokeWidth=".5" /></Svg>,
  anno: <Svg w={22}><path d={person} fill={L} stroke="none" /></Svg>,
  gear: <Svg w={22}><circle cx="11" cy="11" r="5.500" strokeWidth="4" /><circle cx="11" cy="11" r="8.500" strokeWidth="3" strokeDasharray="3.300 3.370" /></Svg>,
  plus: <Svg w={22}><path d="M11 1V21M1 11H21" strokeWidth="3" /></Svg>,
  props: <Svg w={22}><path d="M3.500 1.500H18.500V20.500H3.500Z" /><path d="M4 4H18" strokeWidth="3" /><path d="M6 9H8M10 9H16M6 13H8M10 13H16M6 17H8M10 17H16" strokeWidth="2" /></Svg>,
  lockUi: <Svg w={22}><path d="M9 15.500H1.500V1.500H19.500V10M2 3H19" /><path d="M10 13H18V21H10Z" fill={L} stroke="none" /><path d="M17 13V11C17 9 21 9 21 11V14" /></Svg>,
  shapes: <Svg w={22}><path d="M1.500 1.500H9.500V8.500H1.500ZM8.500 13L13.500 20.500H3.500Z" /><circle cx="17" cy="11" r="4" /></Svg>,
  perf: <Svg w={22}><circle cx="11" cy="11" r="9.500" stroke={W} /><path d="M10 15L16 6L12 15Z" fill={W} stroke={W} /></Svg>,
  full: <Svg w={22}><path d="M1.500 3.500H20.500V18.500H1.500Z" /><path d="M13 6H18V11ZM4 11V16H9Z" fill={L} stroke="none" /><path d="M13 10L17 7M5 15L9 12" /></Svg>,
  menu: <Svg w={22}><path d="M1 3.500H21M1 11H21M1 18.500H21" strokeWidth="3" /></Svg>,
};

const info = {
  binoculars: <Svg w={22}><path d="M3 4L6 2L9 4V8H13V4L16 2L19 4L21 19H13V12H9V19H1Z" fill="#dfe3ea" stroke="#333" /><path d="M3 14H8M14 14H19" stroke="#333" strokeWidth="2" /></Svg>,
  user: <Svg w={22}><ellipse cx="11" cy="8" rx="5" ry="6.500" fill="#dcdcdc" stroke="#333" /><path d="M9 13V15L2 18V20H20V18L13 15V13Z" fill="#dcdcdc" stroke="#333" /></Svg>,
  cart: <Svg w={22}><path d="M1 3H5L8 14H18L20 6H6Z" fill="#e6eaf5" stroke="#2d3b63" strokeWidth="1.500" /><circle cx="9" cy="18" r="2" fill="#e6eaf5" stroke="#2d3b63" /><circle cx="16" cy="18" r="2" fill="#e6eaf5" stroke="#2d3b63" /></Svg>,
  share: <Svg w={22}><path d="M11 5L4 15H18Z" stroke="#2d3b63" strokeWidth="6" strokeLinejoin="round" /><path d="M11 5L4 15H18Z" stroke="#cdd6ea" strokeWidth="4" strokeLinejoin="round" /><path d="M11 8L8 13H14Z" stroke="#2d3b63" /></Svg>,
};

/* ---------- data ---------- */

const ribbonTabs = ["默认", "插入", "注释", "参数化", "视图", "管理", "输出", "附加模块", "协作", "精选应用"];

const quick: [string, React.ReactNode][] = [
  ["新建", qat.fresh], ["打开", qat.open], ["保存", qat.save], ["另存为", qat.saveAs],
  ["从云打开", qat.webOpen], ["保存到云", qat.webSave], ["打印", qat.print], ["放弃", qat.undo],
];

const paletteTools: [string, React.ReactNode][] = [
  ["直线", big.line], ["构造线", big.xline], ["多段线", big.pline], ["正多边形", big.polygon],
  ["矩形", big.rect], ["圆弧", big.arc], ["圆", big.circle], ["修订云线", big.cloud],
  ["样条曲线", big.spline], ["椭圆", big.ellipse], ["椭圆弧", big.ellipseArc],
];

const sideTabs = ["表格", "命令...", "引线", "修改", "常规...", "荧光灯", "高压...", "绘图"];

const collapsed: [string, React.ReactNode][] = [
  ["特性", big.wheel], ["组", big.group], ["实用工具", big.calc], ["剪贴板", big.clip], ["视图", big.base],
];

const Tools = ({ items, cols, gap }: { items: [React.ReactNode, boolean?][]; cols: string; gap?: number }) => (
  <IconRows $cols={cols} $gap={gap}>
    {items.map(([icon, menu], i) => (
      <Tool key={i}>
        {icon}
        {menu && <Caret />}
      </Tool>
    ))}
  </IconRows>
);

const Big = ({ icon, label, w, menu }: { icon: React.ReactNode; label: string; w: number; menu?: boolean }) => (
  <BigButton $w={w}>
    {icon}
    <span>{label}</span>
    {menu && <Caret />}
  </BigButton>
);

const Footing = ({ children }: { children: string }) => (
  <PanelFooter>
    {children}
    <Caret w={10} />
  </PanelFooter>
);

export default function App() {
  return (
    <Window>
      <GlobalStyle />
      <Header>
        <AppButton aria-label="应用程序菜单">
          <svg width="30" height="35" viewBox="0 0 30 35" aria-hidden="true">
            <path d="M9 1H19L30 34H22L18 25H12L8 34H0Z" fill="#b71f27" />
            <path d="M9 1H19L20 5L14 16C10 22 4 25 2 28Z" fill="#e0393c" />
            <path d="M15 10L19 20H10Z" fill="#e9c9c8" />
            <path d="M2 27L11 22L8 34H0Z" fill="#d87873" />
            <path d="M18 25L27 25L30 34H22Z" fill="#8d1519" />
          </svg>
          <Caret w={9} color="#333b45" />
        </AppButton>
        <TitleRow>
          <QuickBar>
            {quick.map(([name, icon]) => (
              <IconButton key={name} aria-label={name}>{icon}</IconButton>
            ))}
            <IconButton $w={15} aria-label="放弃列表"><Caret /></IconButton>
            <IconButton aria-label="重做">{qat.redo}</IconButton>
            <IconButton $w={15} aria-label="重做列表"><Caret color="#ccc" /></IconButton>
            <IconButton aria-label="直线">{qat.line}</IconButton>
            <IconButton aria-label="图纸集">{qat.sheet}</IconButton>
            <IconButton $w={20} aria-label="自定义">
              <Svg w={12}><path d="M1 2H11" stroke="#fff" strokeWidth="1.500" /><path d="M1 5H11L6 10Z" fill="#fff" stroke="none" /></Svg>
            </IconButton>
          </QuickBar>
          <FileName>Drawing1.dwg</FileName>
          <InfoBar>
            <IconButton $w={16} aria-label="展开搜索"><Svg w={8}><path d="M2 0L6 4L2 8Z" fill="#fff" stroke="none" /></Svg></IconButton>
            <Search aria-label="搜索" placeholder="键入关键字或短语" />
            <IconButton aria-label="查找">{info.binoculars}</IconButton>
            <IconButton aria-label="用户">{info.user}</IconButton>
            <Login>登录<Caret /></Login>
            <IconButton $w={46} aria-label="应用商店">{info.cart}</IconButton>
            <IconButton $w={16} aria-label="保持连接">{info.share}</IconButton>
            <IconButton $w={25} aria-label="连接选项"><Caret /></IconButton>
            <Divider />
            <IconButton aria-label="帮助">
              <svg width="22" height="22" viewBox="0 0 22 22" aria-hidden="true">
                <circle cx="11" cy="11" r="9.500" fill="#f3f5fb" stroke="#333" />
                <path d="M8 8C8 4 14 4 14 8C14 10 11 10 11 13M11 15V17" fill="none" stroke="#2a57b0" strokeWidth="2.500" />
              </svg>
            </IconButton>
            <IconButton $w={16} aria-label="帮助选项"><Caret /></IconButton>
          </InfoBar>
          <WindowControls>
            <WindowButton aria-label="最小化"><Svg w={13}><path d="M0 6.500H13" stroke="#111" /></Svg></WindowButton>
            <WindowButton aria-label="最大化"><Svg w={13}><path d="M.5 .5H12.500V12.500H.5Z" stroke="#111" /></Svg></WindowButton>
            <WindowButton aria-label="关闭"><Svg w={13}><path d="M0 0L13 13M13 0L0 13" stroke="#111" /></Svg></WindowButton>
          </WindowControls>
        </TitleRow>
        <TabBar>
          {ribbonTabs.map((t, i) => (
            <RibbonTab key={t} $active={i === 0}>{t}</RibbonTab>
          ))}
          <RibbonToggle aria-label="最小化功能区">
            <svg width="17" height="10" viewBox="0 0 17 10" aria-hidden="true"><rect width="17" height="10" rx="3" fill="#eee" /><path d="M5 7L8.500 3L12 7Z" fill="#333" /></svg>
            <Caret />
          </RibbonToggle>
        </TabBar>
      </Header>

      <Ribbon>
        <Panel $w={265}>
          <PanelBody>
            <Big icon={big.line} label="直线" w={50} />
            <Big icon={big.pline} label="多段线" w={50} />
            <Big icon={big.circle} label="圆" w={50} menu />
            <Big icon={big.arc} label="圆弧" w={56} menu />
            <Tools cols="46px" items={[[small.rect, true], [small.ellipse, true], [small.hatch, true]]} />
          </PanelBody>
          <Footing>绘图</Footing>
        </Panel>
        <Panel $w={166}>
          <PanelBody>
            <Tools
              cols="30px 30px 46px 30px"
              gap={6}
              items={[
                [small.move], [small.rotate], [small.trim, true], [small.erase],
                [small.copy], [small.mirror], [small.fillet, true], [small.explode],
                [small.stretch], [small.scale], [small.array, true], [small.offset],
              ]}
            />
          </PanelBody>
          <Footing>修改</Footing>
        </Panel>
        <Panel $w={157}>
          <PanelBody $pad="5px 0 0 5px">
            <Big icon={big.text} label="文字" w={52} menu />
            <Big icon={big.dim} label="标注" w={52} />
            <Tools cols="46px" items={[[small.linear, true], [small.leader, true], [small.table]]} />
          </PanelBody>
          <Footing>注释</Footing>
        </Panel>
        <Panel $w={315}>
          <PanelBody>
            <BigButton $w={47} $framed>
              {big.layers}
              <span>图层<br />特性</span>
            </BigButton>
            <LayerColumn>
              <LayerCombo>
                <Svg><circle cx="12" cy="9" r="6.500" fill={Y} stroke="none" /><path d="M9 16H15V19L12 21L9 19Z" fill="#fff" stroke="none" /></Svg>
                <Svg w={20}><circle cx="10" cy="10" r="5.500" fill={Y} stroke="none" /><circle cx="10" cy="10" r="8.500" stroke={Y} strokeWidth="2" strokeDasharray="1.500 5.200" /></Svg>
                <Svg w={22}><path d="M2 9H15V20H2ZM8 12V17H9V12Z" fill={Y} stroke="none" fillRule="evenodd" /><path d="M12 9V5C12 1 19 1 19 5V9" stroke={Y} strokeWidth="2.500" /></Svg>
                <Svg w={20}><path d="M2 1H20V19H2Z" fill="#000" stroke="none" /></Svg>
                <LayerSelect aria-label="图层">
                  <option>0</option>
                </LayerSelect>
                <Caret w={9} />
              </LayerCombo>
              <Tools
                cols="repeat(5, 30px)"
                items={[
                  [small.off], [small.isolate], [small.freeze], [small.lock], [small.current],
                  [small.on], [small.unisolate], [small.thaw], [small.unlock], [small.match],
                ]}
              />
            </LayerColumn>
          </PanelBody>
          <Footing>图层</Footing>
        </Panel>
        <Panel $w={100}>
          <PanelBody $pad="5px 0 0 4px">
            <Big icon={big.insert} label="插入" w={46} />
            <Tools cols="46px" items={[[small.create], [small.edit], [small.attr, true]]} />
          </PanelBody>
          <Footing>块</Footing>
        </Panel>
        {collapsed.map(([name, icon]) => (
          <Collapsed key={name}>
            {icon}
            <span>{name}</span>
            <Caret w={10} />
          </Collapsed>
        ))}
      </Ribbon>

      <DocTabs>
        <DocTab>开始</DocTab>
        <DocTab $active>
          Drawing1*
          <Svg w={10}><path d="M1 1L9 9M9 1L1 9" stroke="#444" strokeWidth="2.500" /></Svg>
        </DocTab>
        <AddTab aria-label="新图形"><Svg w={10}><path d="M5 0V10M0 5H10" strokeWidth="2" /></Svg></AddTab>
      </DocTabs>

      <Workspace>
        <Palette>
          <PaletteTitle>
            <Svg w={4} h={12}><path d="M1 0V12M3.500 0V12" stroke="#333" strokeDasharray="1 1" /></Svg>
            工具选项板 - 所...
          </PaletteTitle>
          <PaletteBody>
            <ScrollThumb />
            <ToolList>
              {paletteTools.map(([name, icon]) => (
                <PaletteItem key={name} $active={name === "矩形"}>
                  {icon}
                  <ItemLabel>{name}</ItemLabel>
                </PaletteItem>
              ))}
            </ToolList>
          </PaletteBody>
          <SideTabs>
            {sideTabs.map((t) => (
              <SideTab key={t} $active={t === "绘图"} $clipped={t.endsWith("...")}>
                <SideLabel>{t}</SideLabel>
              </SideTab>
            ))}
            <SideMore />
          </SideTabs>
        </Palette>

        <Canvas>
          <ViewLabel>[−][俯视][二维线框]</ViewLabel>
          <Crosshair>
            <Svg w={129} h={48}>
              <path d="M0 .5H129M64.500 4V48" stroke="#222" />
              <path d="M61.500 -1V3.500H67.500V-1" stroke="#222" />
            </Svg>
          </Crosshair>
          <ViewControls>
            <PlainButton aria-label="最小化视图"><Svg w={16}><path d="M1.500 8.500H15.500V13.500H1.500Z" fill="#fff" stroke="#555" /></Svg></PlainButton>
            <PlainButton aria-label="还原视图"><Svg w={16}><path d="M3.500 1.500H14.500V12.500H3.500ZM1.500 3.500H12.500V14.500H1.500Z" fill="#fff" stroke="#444" /><path d="M5 7H9V11H5Z" stroke="#444" strokeWidth="1.500" /></Svg></PlainButton>
            <PlainButton aria-label="关闭视图"><Svg w={16}><path d="M1.500 2.500H6L8 5L10 2.500H14.500V5L12 8L14.500 11V13.500H10L8 11L6 13.500H1.500V11L4 8L1.500 5Z" fill="#fff" stroke="#444" /><path d="M4 4.500L12 11.500M12 4.500L4 11.500" stroke="#555" strokeWidth="1.500" /></Svg></PlainButton>
          </ViewControls>
          <CubeRing />
          <Compass>
            <CompassPoint $area="1 / 2" $align="start center">北</CompassPoint>
            <CompassPoint $area="2 / 1" $align="center start">西</CompassPoint>
            <CubeFace>上</CubeFace>
            <CompassPoint $area="2 / 3" $align="center end">东</CompassPoint>
            <CompassPoint $area="3 / 2" $align="end center">南</CompassPoint>
          </Compass>
          <Wcs>WCS<Svg w={11} h={8}><path d="M1 1H10L5.500 6Z" stroke="#bbb" /></Svg></Wcs>
          <NavBar>
            <Svg w={40} h={259}>
              <g stroke="#dadada">
                <circle cx="33" cy="6" r="4" /><path d="M31 4L35 8M35 4L31 8" />
                <path d="M19.500 20.500H32.500V34A13 13 0 1 1 19.500 20.500Z" strokeWidth="1.500" />
                <circle cx="19.500" cy="34" r="9" />
                <circle cx="19.500" cy="34" r="6" />
                <path d="M15 101C11 94 6 91 8 89C10 87 13 91 14 92L11 79C11 76 14 76 15 79L17 86L18 75C19 73 22 73 22 76V86L26 76C27 74 30 75 29 78L27 88L31 82C33 80 35 83 33 85C31 91 29 96 26 101Z" strokeWidth="1.500" />
                <path d="M6 110L26 130M26 110L6 130M6 116V110H12M20 110H26V116M6 124V130H12" strokeWidth="1.500" />
                <circle cx="26" cy="127" r="6" fill="#f6f6f6" strokeWidth="1.500" />
                <path d="M30 131L35 136" strokeWidth="3" />
                <path d="M17 183V162H15L19.500 156L24 162H22V183ZM11 177L6 171L11 166V169H17M22 169C36 166 36 175 22 177M17 175H11" strokeWidth="1.500" />
                <path d="M6.500 206.500H13.500V213.500H6.500ZM16.500 206.500H23.500V213.500H16.500ZM26.500 206.500H33.500V213.500H26.500ZM6.500 218.500H25.500V233.500H6.500Z" strokeWidth="1.500" />
                <circle cx="33" cy="251" r="4" /><path d="M31 251H35" />
                <path d="M3 67.500H37M3 201.500H37" stroke="#cfcfcf" />
              </g>
              <path d="M17 59H23L20 62ZM17 146H23L20 149ZM17 193H23L20 196ZM13 221L22 226L13 231Z" fill="#cfcfcf" stroke="none" />
            </Svg>
          </NavBar>
          <UcsIcon>
            <Svg w={92} h={92}>
              <path d="M7.500 84V21M7.500 84.500H70M2.500 79.500H13.500V90.500H2.500ZM9 2L16.500 10L24 2M16.500 10V17M74 68L89 83M89 68L74 83" stroke="#222" />
            </Svg>
          </UcsIcon>
          <CommandLine>
            <CommandGrip>
              <Svg w={8} h={22}><path d="M2 1V22M6 1V22" stroke="#ddd" strokeWidth="1.500" strokeDasharray="2 2" /></Svg>
              <Svg w={10}><path d="M1 1L9 9M9 1L1 9" stroke="#fff" strokeWidth="2" /></Svg>
              <Svg w={20}><path d="M2 5L5 8L8 5L5 2C9 0 12 4 11 7L18 15C19 18 16 19 14 17L7 10C3 11 0 8 2 5Z" fill="#fff" stroke="#777" /></Svg>
            </CommandGrip>
            <Svg w={36} h={32}>
              <rect x="6" y="8" width="18" height="16" rx="2" fill="#e6e8ed" stroke="#b9bdc5" />
              <path d="M9 12L13 16L9 20M15 20H21" stroke="#777" strokeWidth="1.500" />
              <path d="M29 14H36L32.500 18Z" fill="#888" stroke="none" />
            </Svg>
            <CommandInput aria-label="命令" placeholder="键入命令" />
            <Svg w={20} h={32}><path d="M6 18H14L10 13Z" fill="#999" stroke="none" /></Svg>
          </CommandLine>
        </Canvas>
      </Workspace>

      <Footer>
        <LayoutTabs>
          <LayoutTab $active>模型</LayoutTab>
          <LayoutTab>布局1</LayoutTab>
          <LayoutTab>布局2</LayoutTab>
          <AddTab $bottom aria-label="新建布局"><Svg w={10}><path d="M5 0V10M0 5H10" strokeWidth="2" /></Svg></AddTab>
        </LayoutTabs>
        <StatusBar>
          <StatusGroup $w={229}><Coordinates>2720.9579, 1477.3576, 0.0000</Coordinates></StatusGroup>
          <StatusGroup $w={118}>
            <StatusButton $w={34}>模型</StatusButton>
            <StatusButton $on>{st.grid}</StatusButton>
            <StatusButton>{st.snap}</StatusButton>
            <StatusButton $w={20}><Caret w={8} /></StatusButton>
          </StatusGroup>
          <StatusGroup $w={271}>
            <StatusButton>{st.infer}</StatusButton>
            <StatusButton $on>{st.dyn}</StatusButton>
            <StatusButton>{st.ortho}</StatusButton>
            <StatusButton>{st.polar}</StatusButton>
            <StatusButton $w={20}><Caret w={8} /></StatusButton>
            <StatusButton>{st.iso}</StatusButton>
            <StatusButton $w={20}><Caret w={8} /></StatusButton>
            <StatusButton $on>{st.track}</StatusButton>
            <StatusButton $on>{st.osnap}</StatusButton>
            <StatusButton $w={20}><Caret w={8} /></StatusButton>
          </StatusGroup>
          <StatusGroup $w={184}>
            <StatusButton $on>{st.annoVis}</StatusButton>
            <StatusButton>{st.annoAuto}</StatusButton>
            <StatusButton>{st.anno}</StatusButton>
            <StatusButton $w={90}>1:1 / 100%<Caret w={8} /></StatusButton>
          </StatusGroup>
          <StatusGroup $w={52}>
            <StatusButton>{st.gear}</StatusButton>
            <StatusButton $w={18}><Caret w={8} /></StatusButton>
          </StatusGroup>
          <StatusGroup $w={31}><StatusButton $w={28}>{st.plus}</StatusButton></StatusGroup>
          <StatusGroup $w={32}><StatusButton $w={28}>{st.props}</StatusButton></StatusGroup>
          <StatusGroup $w={53}>
            <StatusButton>{st.lockUi}</StatusButton>
            <StatusButton $w={18}><Caret w={8} /></StatusButton>
          </StatusGroup>
          <StatusGroup $w={31}><StatusButton $w={28}>{st.shapes}</StatusButton></StatusGroup>
          <StatusGroup $w={34}><StatusButton $on>{st.perf}</StatusButton></StatusGroup>
          <StatusGroup $w={68}>
            <StatusButton $w={32}>{st.full}</StatusButton>
            <StatusButton>{st.menu}</StatusButton>
          </StatusGroup>
        </StatusBar>
      </Footer>

      <PointerArrow>
        <Svg w={140} h={350}>
          <path d="M11 7L29 26L23 28L137 347L14 31L9 33Z" fill="#fa3b3b" stroke="#e23a3a" />
        </Svg>
      </PointerArrow>

      <Watermark>
        <WatermarkLogo>
          <span>Bai</span>
          <WatermarkPaw>
            <Svg w={74} h={80}>
              <g fill="#fffffff0" stroke="#cfcfcf" strokeWidth="2">
                <ellipse cx="28" cy="14" rx="9" ry="12" />
                <ellipse cx="51" cy="15" rx="9" ry="12" />
                <ellipse cx="12" cy="33" rx="9" ry="12" />
                <ellipse cx="64" cy="37" rx="8" ry="12" />
                <path d="M38 32C50 32 50 44 62 55C70 64 66 79 52 79H24C8 79 6 64 14 55C26 44 26 32 38 32Z" />
              </g>
            </Svg>
            <WatermarkDu>du</WatermarkDu>
          </WatermarkPaw>
          <WatermarkCn>经验</WatermarkCn>
        </WatermarkLogo>
        <WatermarkUrl>jingyan.baidu.com</WatermarkUrl>
      </Watermark>
    </Window>
  );
}
